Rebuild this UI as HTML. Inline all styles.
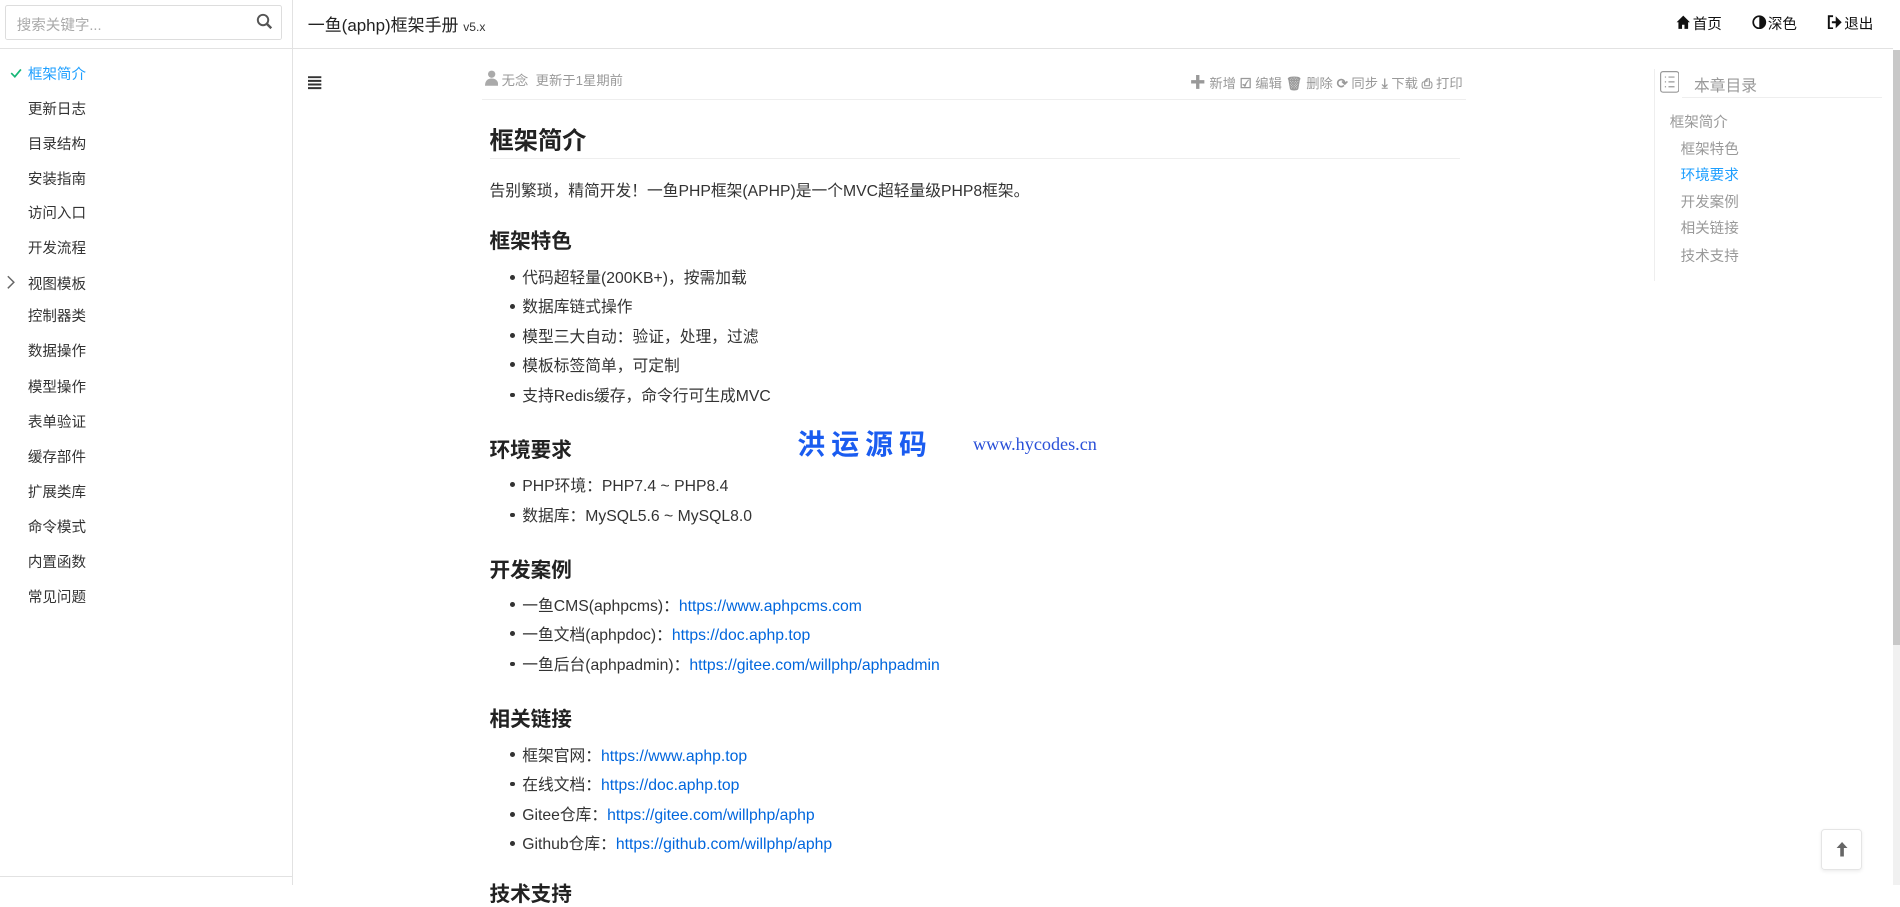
<!DOCTYPE html>
<html><head><meta charset="utf-8">
<style>
html{zoom:1.2117}
*{margin:0;padding:0;box-sizing:border-box}
body{width:1568px;height:730px;overflow:hidden;position:relative;background:#fff;font-family:"Liberation Sans","Noto Sans CJK SC",sans-serif;color:#333}
.a{position:absolute;white-space:nowrap}
.side{position:absolute;left:0;top:0;width:242px;height:730px;border-right:1px solid #e2e2e2}
.search{position:absolute;left:4px;top:4px;width:229px;height:29px;border:1px solid #ddd;border-radius:2px;font-size:12px;color:#aaa;padding:7px 9px}
.hdr{position:absolute;left:0;top:40px;width:1562px;border-top:1px solid #e2e2e2}
.nav{font-size:12px;color:#333}
.li{font-size:13px;color:#333}
.li:before{content:"";position:absolute;left:-10px;top:8px;width:4px;height:4px;border-radius:50%;background:#333}
.h2{font-size:17px;font-weight:bold;color:#222}
a{color:#0066dd;text-decoration:none}
.toc{font-size:12px;color:#999}
.tool{font-size:11px;color:#999}
</style></head><body>
<div class="side"></div>
<div class="search">搜索关键字...</div>
<svg class="a" style="left:211px;top:11px" width="14" height="14" viewBox="0 0 14 14"><circle cx="5.8" cy="5.8" r="4.3" fill="none" stroke="#555" stroke-width="1.6"/><path d="M9 9l3.6 3.6" stroke="#555" stroke-width="2"/></svg>
<div class="hdr"></div>
<div class="a" style="left:0;top:723px;width:242px;border-top:1px solid #e2e2e2"></div>

<svg class="a" style="left:8px;top:55px" width="10" height="10" viewBox="0 0 10 10"><path d="M1 5l3 3 5-6" fill="none" stroke="#16b777" stroke-width="1.4"/></svg>
<div class="a nav" style="left:23px;top:52px;color:#1e9fff">框架简介</div>
<div class="a nav" style="left:23px;top:81px">更新日志</div>
<div class="a nav" style="left:23px;top:110px">目录结构</div>
<div class="a nav" style="left:23px;top:139px">安装指南</div>
<div class="a nav" style="left:23px;top:167px">访问入口</div>
<div class="a nav" style="left:23px;top:196px">开发流程</div>
<svg class="a" style="left:5px;top:227px" width="8" height="12" viewBox="0 0 8 12"><path d="M1.5 1l5 5-5 5" fill="none" stroke="#666" stroke-width="1.2"/></svg>
<div class="a nav" style="left:23px;top:225px">视图模板</div>
<div class="a nav" style="left:23px;top:252px">控制器类</div>
<div class="a nav" style="left:23px;top:281px">数据操作</div>
<div class="a nav" style="left:23px;top:310px">模型操作</div>
<div class="a nav" style="left:23px;top:339px">表单验证</div>
<div class="a nav" style="left:23px;top:368px">缓存部件</div>
<div class="a nav" style="left:23px;top:397px">扩展类库</div>
<div class="a nav" style="left:23px;top:426px">命令模式</div>
<div class="a nav" style="left:23px;top:455px">内置函数</div>
<div class="a nav" style="left:23px;top:484px">常见问题</div>

<div class="a" style="left:254px;top:9px;font-size:14px;color:#222">一鱼(aphp)框架手册 <span style="font-size:10px;color:#333">v5.x</span></div>
<svg class="a" style="left:1383px;top:12px" width="12" height="12" viewBox="0 0 12 12"><path d="M6 0.5L0.5 6H2v5.5h3V8h2v3.5h3V6h1.5z" fill="#111"/></svg>
<div class="a nav" style="left:1397px;top:11px;color:#111">首页</div>
<svg class="a" style="left:1446px;top:12px" width="12" height="12" viewBox="0 0 12 12"><circle cx="6" cy="6" r="5" fill="none" stroke="#111" stroke-width="1.4"/><path d="M6 1a5 5 0 0 1 0 10z" fill="#111"/></svg>
<div class="a nav" style="left:1459px;top:11px;color:#111">深色</div>
<svg class="a" style="left:1508px;top:12px" width="13" height="12" viewBox="0 0 13 12"><path d="M5 1H1.5v10H5" fill="none" stroke="#111" stroke-width="1.6"/><path d="M4 6h5M8 3l3 3-3 3z" stroke="#111" stroke-width="1.6" fill="#111"/></svg>
<div class="a nav" style="left:1522px;top:11px;color:#111">退出</div>

<svg class="a" style="left:254px;top:63px" width="12" height="11" viewBox="0 0 12 11"><path d="M0 1h11M0 4h11M0 7h11M0 10h11" stroke="#333" stroke-width="1.6"/></svg>

<svg class="a" style="left:400px;top:58px" width="11" height="13" viewBox="0 0 11 13"><circle cx="5.5" cy="3.5" r="3" fill="#aaa"/><path d="M0 13c0-4 2-6 5.5-6S11 9 11 13z" fill="#aaa"/></svg>
<div class="a tool" style="left:414px;top:58px">无念 &nbsp;更新于1星期前</div>
<div class="a tool" style="left:982px;top:58px"><b style="font-size:13px">✚</b> 新增 <b>☑</b> 编辑 <b>🗑</b> 删除 <b>⟳</b> 同步 <b>⤓</b> 下载 <b>⎙</b> 打印</div>
<div class="a" style="left:398px;top:82px;width:812px;border-top:1px solid #eee"></div>

<div class="a" style="left:404px;top:100px;font-size:20px;font-weight:bold;color:#222">框架简介</div>
<div class="a" style="left:404px;top:130px;width:801px;border-top:1px solid #eee"></div>
<div class="a" style="left:404px;top:147px;font-size:13px">告别繁琐，精简开发！一鱼PHP框架(APHP)是一个MVC超轻量级PHP8框架。</div>

<div class="a h2" style="left:404px;top:185px">框架特色</div>
<div class="a li" style="left:431px;top:219px">代码超轻量(200KB+)，按需加载</div>
<div class="a li" style="left:431px;top:243px">数据库链式操作</div>
<div class="a li" style="left:431px;top:267px">模型三大自动：验证，处理，过滤</div>
<div class="a li" style="left:431px;top:291px">模板标签简单，可定制</div>
<div class="a li" style="left:431px;top:316px">支持Redis缓存，命令行可生成MVC</div>

<div class="a h2" style="left:404px;top:357px">环境要求</div>
<div class="a" style="left:658px;top:349px;font-size:23px;font-weight:bold;color:#1a5cf0;letter-spacing:5px">洪运源码</div>
<div class="a" style="left:803px;top:358px;font-size:15px;color:#2a50d8;font-family:'Liberation Serif',serif">www.hycodes.cn</div>
<div class="a li" style="left:431px;top:390px">PHP环境：PHP7.4 ~ PHP8.4</div>
<div class="a li" style="left:431px;top:415px">数据库：MySQL5.6 ~ MySQL8.0</div>

<div class="a h2" style="left:404px;top:456px">开发案例</div>
<div class="a li" style="left:431px;top:489px">一鱼CMS(aphpcms)：<a>https://www.aphpcms.com</a></div>
<div class="a li" style="left:431px;top:513px">一鱼文档(aphpdoc)：<a>https://doc.aphp.top</a></div>
<div class="a li" style="left:431px;top:538px">一鱼后台(aphpadmin)：<a>https://gitee.com/willphp/aphpadmin</a></div>

<div class="a h2" style="left:404px;top:579px">相关链接</div>
<div class="a li" style="left:431px;top:613px">框架官网：<a>https://www.aphp.top</a></div>
<div class="a li" style="left:431px;top:637px">在线文档：<a>https://doc.aphp.top</a></div>
<div class="a li" style="left:431px;top:662px">Gitee仓库：<a>https://gitee.com/willphp/aphp</a></div>
<div class="a li" style="left:431px;top:686px">Github仓库：<a>https://github.com/willphp/aphp</a></div>
<div class="a h2" style="left:404px;top:724px">技术支持</div>

<div class="a" style="left:1365px;top:57px;height:175px;border-left:1px solid #eee"></div>
<svg class="a" style="left:1370px;top:59px" width="16" height="18" viewBox="0 0 16 18"><rect x="0.5" y="0.5" width="15" height="17" rx="2" fill="none" stroke="#999"/><path d="M4 5h1M7 5h5M4 9h1M7 9h5M4 13h1M7 13h5" stroke="#999"/></svg>
<div class="a" style="left:1398px;top:60px;font-size:13px;color:#999">本章目录</div>
<div class="a" style="left:1388px;top:80px;width:165px;border-top:1px solid #eee"></div>
<div class="a toc" style="left:1378px;top:92px">框架简介</div>
<div class="a toc" style="left:1387px;top:114px">框架特色</div>
<div class="a toc" style="left:1387px;top:135px;color:#1e9fff">环境要求</div>
<div class="a toc" style="left:1387px;top:158px">开发案例</div>
<div class="a toc" style="left:1387px;top:179px">相关链接</div>
<div class="a toc" style="left:1387px;top:202px">技术支持</div>

<div class="a" style="left:1562px;top:41px;width:6px;height:689px;background:#f1f1f1"></div>
<div class="a" style="left:1562px;top:41px;width:6px;height:491px;background:#c8c8c8"></div>

<div class="a" style="left:1503px;top:684px;width:34px;height:34px;border:1px solid #e5e5e5;border-radius:3px;box-shadow:0 1px 3px rgba(0,0,0,.08)"></div>
<svg class="a" style="left:1515px;top:695px" width="10" height="12" viewBox="0 0 10 12"><path d="M5 0L0.5 5H3.5v7h3V5h3z" fill="#666"/></svg>
</body></html>
